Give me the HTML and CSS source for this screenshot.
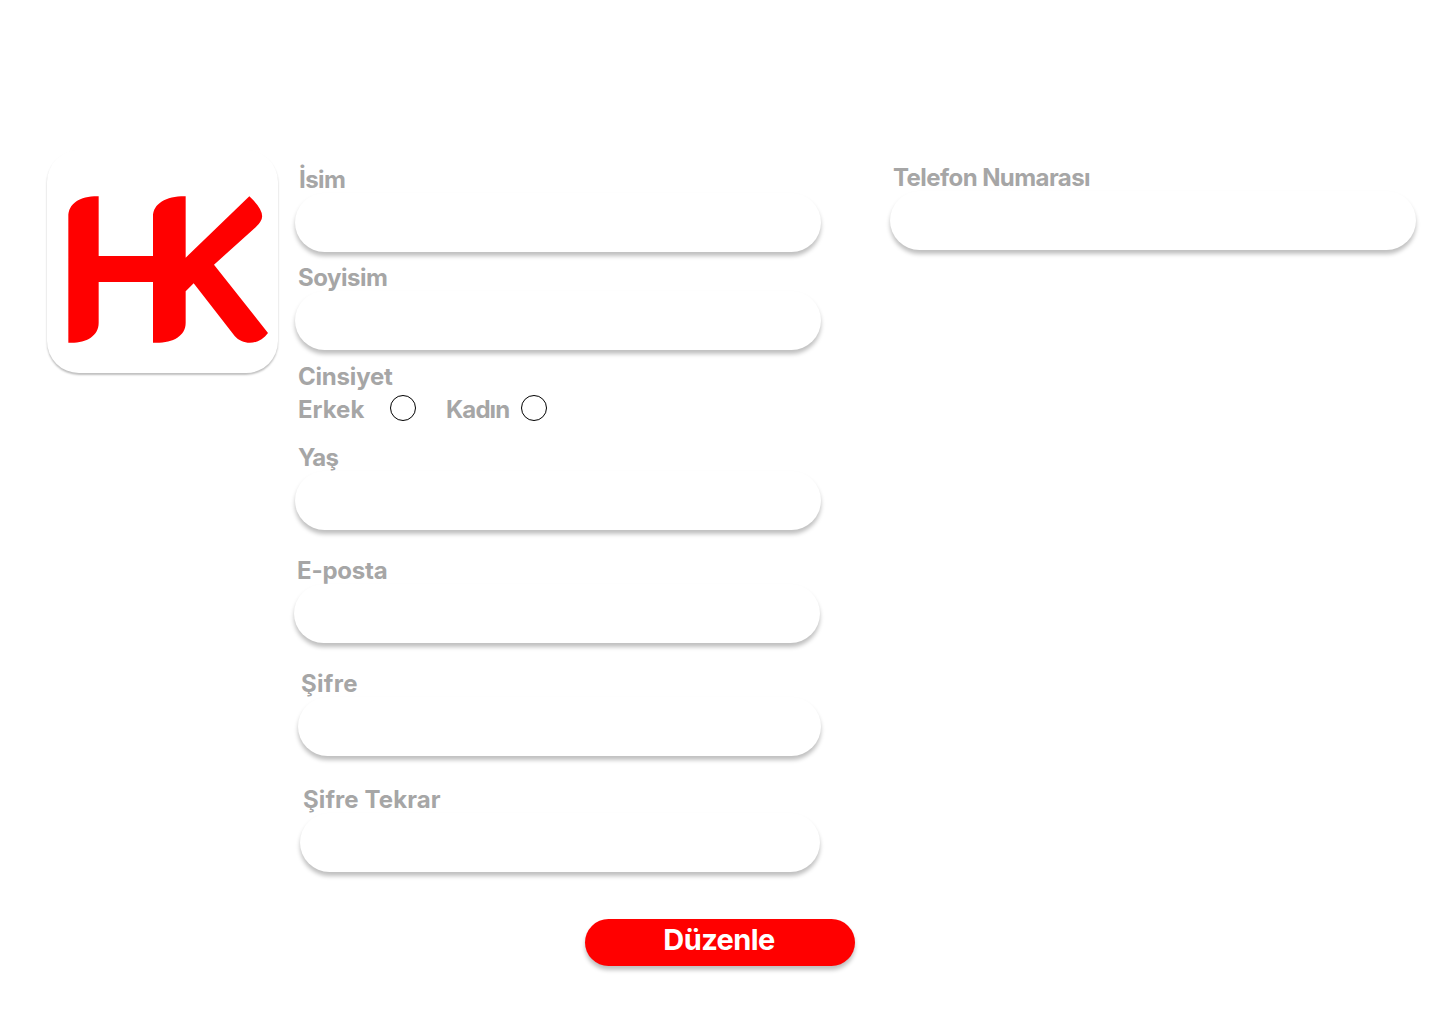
FILE: index.html
```html
<!DOCTYPE html>
<html lang="tr">
<head>
<meta charset="utf-8">
<title>Profil Düzenle</title>
<link rel="stylesheet" href="styles.css">
</head>
<body>
<form class="page">
  <div class="columns">
    <div class="logo">
      <svg class="logo-mark" viewBox="51 30 693 669" aria-label="HK">
        <path d="M115 608V230C115 190 150 168 206 169V348H369V230C369 190 410 168 467 169V353L658 169Q711 218 691 245Q687 252 677 262L552 374L714 579C688 616 639 617 614 588L491 430L467 454V548C467 590 425 611 369 608V426H206V548C206 590 165 611 115 608Z"/>
      </svg>
    </div>
    <div class="main-fields">
      <div class="field isim"><label class="label" for="isim"><span>İsim</span></label><input class="input" id="isim"></div>
      <div class="field soyisim"><label class="label" for="soyisim"><span>Soyisim</span></label><input class="input" id="soyisim"></div>
      <div class="gender">
        <div class="gender-title"><span>Cinsiyet</span></div>
        <div class="gender-options">
          <label class="option erkek"><span>Erkek</span><input class="radio" type="radio" name="cinsiyet"></label>
          <label class="option kadin"><span>Kadın</span><input class="radio" type="radio" name="cinsiyet"></label>
        </div>
      </div>
      <div class="field yas"><label class="label" for="yas"><span>Yaş</span></label><input class="input" id="yas"></div>
      <div class="field eposta"><label class="label" for="eposta"><span>E-posta</span></label><input class="input" id="eposta"></div>
      <div class="field sifre"><label class="label" for="sifre"><span>Şifre</span></label><input class="input" id="sifre" type="password"></div>
      <div class="field tekrar"><label class="label" for="tekrar"><span>Şifre Tekrar</span></label><input class="input" id="tekrar" type="password"></div>
    </div>
    <div class="field telefon"><label class="label" for="telefon"><span>Telefon Numarası</span></label><input class="input" id="telefon"></div>
  </div>
  <button class="submit" type="button">Düzenle</button>
</form>
</body>
</html>
```
FILE: styles.css
```css
* { box-sizing: border-box; }
body { margin: 0; background: #fff; font-family: Inter, "Noto Sans", sans-serif; }
.page { width: 1440px; height: 1024px; padding-top: 142px; display: flex; flex-direction: column; align-items: center; overflow: hidden; }
.columns { width: 1440px; padding-left: 47px; display: flex; align-items: flex-start; }
.logo { width: 231px; height: 223px; margin: 8px 16px 0 0; border-radius: 32px; background: #fff; box-shadow: 0 2px 2px rgba(0, 0, 0, .25); }
.logo-mark { display: block; width: 231px; height: 223px; fill: #f00; }
.main-fields { width: 527px; margin-top: 14px; display: flex; flex-direction: column; }
.field { display: flex; flex-direction: column; margin-left: 1px; width: 526px; }
.label { height: 37px; padding: 11px 0 0 3px; line-height: 25px; }
.label, .gender { color: #a6a6a6; font-size: 24px; font-weight: 700; white-space: nowrap; }
.input { width: 100%; height: 59px; padding: 0 24px; border: 0; border-radius: 30px; background: transparent; box-shadow: 0 4px 4px rgba(0, 0, 0, .25); font: 500 20px Inter, sans-serif; outline: 0; }
.isim .label { letter-spacing: -.6px; padding-left: 4px; }
.soyisim { margin-top: 2px; }
.soyisim .label { letter-spacing: -.5px; }
.gender { height: 84px; padding: 13px 0 0 4px; line-height: 28px; }
.gender-title { height: 32px; letter-spacing: -.2px; }
.gender-options { display: flex; height: 26px; }
.option { display: flex; align-items: center; height: 26px; }
.erkek { width: 148px; }
.erkek span { width: 92px; padding-top: 4px; }
.kadin span { width: 75px; padding-top: 4px; letter-spacing: -.9px; }
.radio { appearance: none; width: 26px; height: 26px; margin: 0; border: 1px solid #000; border-radius: 50%; background: #fff; }
.yas .label { letter-spacing: -.8px; }
.eposta { margin: 17px 0 0; }
.eposta .label { letter-spacing: -.2px; }
.sifre { margin: 17px 0 0 4px; width: 523px; }
.sifre .label { letter-spacing: .3px; }
.tekrar { margin: 20px 0 0 6px; width: 520px; }
.tekrar .label { letter-spacing: .1px; }
.telefon { margin: 12px 0 0 69px; }
.telefon .label { letter-spacing: -.56px; }
.submit { width: 270px; height: 47px; margin-top: 47px; padding: 0 2px 5px 0; border: 0; border-radius: 24px; background: #f00; box-shadow: 0 4px 4px rgba(0, 0, 0, .25); color: #fff; font: 700 29px/42px Inter, "Noto Sans", sans-serif; letter-spacing: -.6px; }
```
